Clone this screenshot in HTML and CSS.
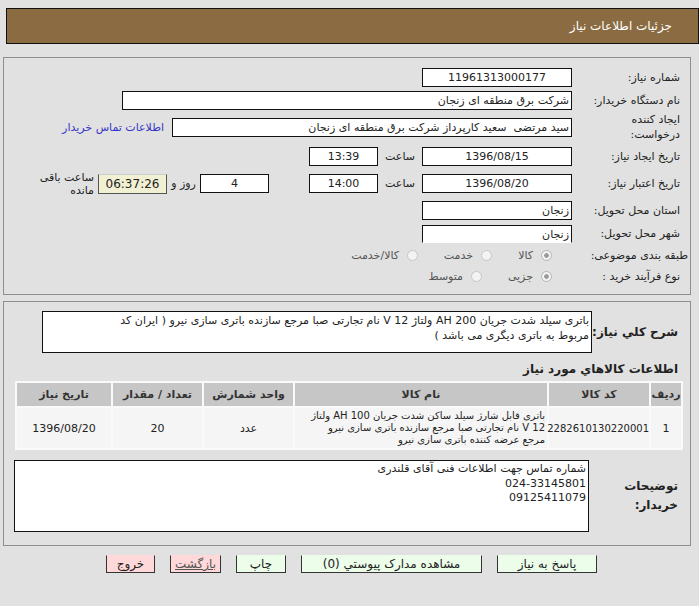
FILE: index.html
```html
<!DOCTYPE html>
<html lang="fa" dir="rtl">
<head>
<meta charset="utf-8">
<title>جزئیات اطلاعات نیاز</title>
<link rel="stylesheet" href="styles.css">
</head>
<body>
<div class="header"><span>جزئیات اطلاعات نیاز</span></div>

<div class="panel p1">
  <div class="row r1">
    <div class="lbl">شماره نیاز:</div>
    <div class="box w150 c">11961313000177</div>
  </div>
  <div class="row r2">
    <div class="lbl">نام دستگاه خریدار:</div>
    <div class="box w450">شرکت برق منطقه ای زنجان</div>
  </div>
  <div class="row r3">
    <div class="lbl">ایجاد کننده<br>درخواست:</div>
    <div class="box w400 pre">سید مرتضی  سعید کارپرداز شرکت برق منطقه ای زنجان</div>
    <a class="link" href="#">اطلاعات تماس خریدار</a>
  </div>
  <div class="row r4">
    <div class="lbl">تاریخ ایجاد نیاز:</div>
    <div class="box w150 c">1396/08/15</div>
    <div class="saat">ساعت</div>
    <div class="box w69 c">13:39</div>
  </div>
  <div class="row r5">
    <div class="lbl">تاریخ اعتبار نیاز:</div>
    <div class="box w150 c">1396/08/20</div>
    <div class="saat">ساعت</div>
    <div class="box w69 c">14:00</div>
    <div class="box w69 c days">4</div>
    <div class="rooz">روز و</div>
    <div class="timer">06:37:26</div>
    <div class="remain">ساعت باقی<br>مانده</div>
  </div>
  <div class="row r6">
    <div class="lbl">استان محل تحویل:</div>
    <div class="box w150">زنجان</div>
  </div>
  <div class="row r7">
    <div class="lbl">شهر محل تحویل:</div>
    <div class="box w150 nob">زنجان</div>
  </div>
  <div class="row r8">
    <div class="lbl wide">طبقه بندی موضوعی:</div>
    <div class="opt o1"><span class="radio on"></span><span class="otext">کالا</span></div>
    <div class="opt o2"><span class="radio"></span><span class="otext">خدمت</span></div>
    <div class="opt"><span class="radio"></span><span class="otext">کالا/خدمت</span></div>
  </div>
  <div class="row r9">
    <div class="lbl">نوع فرآیند خرید :</div>
    <div class="opt o3"><span class="radio on"></span><span class="otext">جزیی</span></div>
    <div class="opt"><span class="radio"></span><span class="otext">متوسط</span></div>
  </div>
</div>

<div class="panel p2">
  <div class="row desc">
    <div class="lbl2 b">شرح کلي نياز:</div>
    <div class="ta ta1">باتری  سیلد شدت جریان 200 AH ولتاژ 12 V نام تجارتی صبا مرجع سازنده باتری سازی نیرو ( ایران کد<br>مربوط به باتری دیگری می باشد )</div>
  </div>
  <div class="title b">اطلاعات کالاهاي مورد نياز</div>
  <table class="grid">
    <thead>
      <tr>
        <th class="c1">ردیف</th>
        <th class="c2">کد کالا</th>
        <th class="c3">نام کالا</th>
        <th class="c4">واحد شمارش</th>
        <th class="c5">تعداد / مقدار</th>
        <th class="c6">تاریخ نیاز</th>
      </tr>
    </thead>
    <tbody>
      <tr>
        <td>1</td>
        <td class="code">2282610130220001</td>
        <td class="name">باتری قابل شارژ سیلد ساکن شدت جریان 100 AH ولتاژ<br>12 V نام تجارتی صبا مرجع سازنده باتری سازی نیرو<br>مرجع عرضه کننده باتری سازی نیرو</td>
        <td>عدد</td>
        <td>20</td>
        <td>1396/08/20</td>
      </tr>
    </tbody>
  </table>
  <div class="row notes">
    <div class="lbl3 b">توضیحات<br>خریدار:</div>
    <div class="ta ta2">شماره تماس جهت اطلاعات فنی آقای قلندری<br>024-33145801<br>09125411079</div>
  </div>
</div>

<div class="buttons">
  <span class="btn green bw100">پاسخ به نياز</span>
  <span class="btn green bw181">مشاهده مدارک پیوستي (0)</span>
  <span class="btn green bw50">چاپ</span>
  <span class="btn pink bw51 ul">بازگشت</span>
  <span class="btn pink bw49">خروج</span>
</div>
</body>
</html>
```

FILE: styles.css
```css
* { box-sizing: border-box; }
html, body { margin: 0; padding: 0; }
body {
  direction: rtl;
  background: #e1e1e1;
  font-family: "DejaVu Sans", sans-serif;
  font-size: 11px;
  color: #222;
  width: 699px;
  height: 606px;
  overflow: hidden;
}
.header {
  margin: 8px 0 0 6px;
  height: 36px;
  background: #8b6c42;
  border: 1px solid #111;
  color: #fff;
  font-size: 12px;
  display: flex;
  align-items: center;
  padding-right: 26px;
}
.panel {
  border: 1px solid #8e8e8e;
  margin: 0 8px 0 3px;
}
.p1 {
  margin-top: 13px;
  padding: 8px 10px 9px 0;
}
.row { display: flex; align-items: center; }
.lbl { width: 108px; flex: none; line-height: 15px; }
.lbl.wide { margin-right: -8px; width: 116px; }
.r1 { height: 23px; }
.r2 { height: 22px; }
.r3 { height: 32px; }
.r4 { height: 27px; }
.r5 { height: 27px; }
.r6 { height: 27px; }
.r7 { height: 19px; }
.r8 { height: 24px; }
.r9 { height: 18px; }
.box {
  height: 19px;
  line-height: 17px;
  border: 1px solid #111;
  background: #fff;
  padding: 0 2px;
  white-space: nowrap;
  overflow: hidden;
  flex: none;
}
.box.nob { border-bottom-color: #fff; height: 18px; }
.pre { white-space: pre; }
.c { text-align: center; }
.w150 { width: 150px; }
.w450 { width: 450px; }
.w400 { width: 400px; }
.w69 { width: 69px; }
.link { color: #3535c8; text-decoration: none; margin-right: 8px; white-space: nowrap; }
.saat { width: 44px; text-align: center; flex: none; }
.days { margin-right: 40px; }
.rooz { width: 33px; text-align: center; flex: none; }
.timer {
  width: 69px;
  height: 20px;
  line-height: 18px;
  background: #f2f0d2;
  border: 1px solid #555;
  border-top-color: #ccc;
  text-align: center;
  flex: none;
  font-size: 12px;
}
.remain { margin-right: 4px; line-height: 13px; }
.opt { display: flex; align-items: center; flex: none; color: #555; }
.o1 { width: 60px; }
.o2 { width: 74px; }
.o3 { width: 70px; }
.r8 .o1, .r9 .o3 { margin-right: 20px; }
.radio {
  width: 11px; height: 11px;
  border-radius: 50%;
  border: 1px solid #c6c6c6;
  background: #f3f3f3;
  margin-left: 8px;
  flex: none;
}
.radio.on { background: radial-gradient(circle, #9a9a9a 0 2px, #f3f3f3 2.6px); border-color: #b5b5b5; }

.p2 {
  margin-top: 6px;
  padding: 9px 7px 13px 11px;
}
.b { font-weight: bold; color: #222; }
.desc { height: 42px; }
.lbl2 { width: 91px; padding-right: 5px; flex: none; font-size: 12px; }
.ta {
  background: #fff;
  border: 1px solid #111;
  padding: 0 2px;
  line-height: 15px;
  white-space: nowrap;
  overflow: hidden;
  flex: none;
}
.ta1 { width: 550px; height: 42px; padding-top: 1px; }
.title { height: 16px; line-height: 16px; margin-top: 8px; padding-right: 5px; font-size: 12px; }
.grid {
  margin-top: 4px;
  width: 668px;
  border-collapse: separate;
  border-spacing: 2px;
  background: #fafafa;
  table-layout: fixed;
}
.grid th {
  background: #c6c6c6;
  height: 23px;
  font-weight: bold;
  color: #333;
  padding: 0;
}
.grid td {
  background: #f5f5f5;
  height: 40px;
  text-align: center;
  padding: 0;
}
.grid td.code { font-size: 10px; }
.grid td.name { text-align: right; line-height: 12px; padding-right: 2px; white-space: nowrap; overflow: hidden; font-size: 10px; }
.c1 { width: 30px; }
.c2 { width: 100px; }
.c3 { width: 252px; }
.c4 { width: 89px; }
.c5 { width: 89px; }
.c6 { width: 94px; }
.notes { height: 72px; margin-top: 10px; }
.lbl3 { width: 94px; padding-right: 5px; flex: none; font-size: 12px; line-height: 19px; }
.ta2 { width: 575px; height: 72px; padding-top: 1px; line-height: 14.5px; }

.buttons {
  display: flex;
  justify-content: center;
  gap: 15px;
  margin-top: 9px;
  padding-left: 4px;
}
.btn {
  height: 18px;
  line-height: 17px;
  text-align: center;
  border: 1px solid #333;
  border-top-color: transparent;
  color: #222;
  font-size: 12px;
}
.green { background: #ecfdea; }
.pink { background: #ffd9d9; }
.ul { text-decoration: underline; color: #555; }
.bw100 { width: 100px; }
.bw181 { width: 181px; }
.bw50 { width: 50px; }
.bw51 { width: 51px; }
.bw49 { width: 49px; }
```
